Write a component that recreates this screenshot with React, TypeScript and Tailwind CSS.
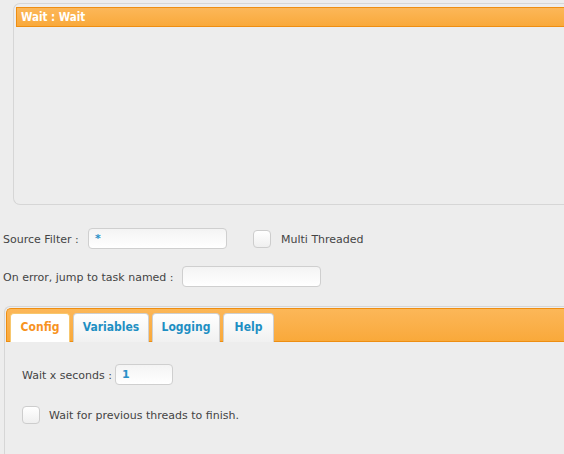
import React from 'react'

const font = { fontFamily: '"DejaVu Sans", Verdana, sans-serif' }
const cond = { fontFamily: '"DejaVu Sans Condensed", "DejaVu Sans", sans-serif' }

const TextInput = ({ value, className }: { value?: string; className?: string }) => (
  <div
    className={`h-[21px] rounded-[4px] border border-[#cfcfcf] bg-gradient-to-b from-[#f4f4f4] to-white pl-[6px] text-[11px] leading-[19px] font-bold text-[#2a90c8] ${className || ''}`}
  >
    {value}
  </div>
)

const CheckBox = () => (
  <div className="h-[18px] w-[18px] shrink-0 rounded-[4px] border border-[#cdcdcd] bg-gradient-to-b from-white to-[#efefef]" />
)

// label sits 1px lower than the box centre
const Label = ({ children, className }: { children: React.ReactNode; className?: string }) => (
  <div className={`h-[21px] leading-[23px] ${className || ''}`}>{children}</div>
)

const tabs = [
  { label: 'Config', w: 'w-[60px]', active: true },
  { label: 'Variables', w: 'w-[76px]' },
  { label: 'Logging', w: 'w-[68px]' },
  { label: 'Help', w: 'w-[51px]' },
]

export default function App() {
  return (
    <div
      className="h-[454px] w-[564px] overflow-hidden bg-[#ededed] text-[11px] text-[#444]"
      style={font}
    >
      {/* task list */}
      <div className="ml-[13px] mt-[3px] h-[202px] w-[560px] rounded-l-[7px] border border-r-0 border-[#d6d6d6] pl-[2px] pt-[3px]">
        <div
          className="h-[20px] border border-[#ee8e12] bg-gradient-to-b from-[#fcb758] to-[#f9a93a] pl-[4px] text-[11.5px] font-bold leading-[18px] text-white"
          style={cond}
        >
          Wait : Wait
        </div>
      </div>

      {/* filter row */}
      <div className="mt-[23px] flex items-center">
        <Label className="w-[88px] pl-[3px]">Source Filter :</Label>
        <TextInput value="*" className="w-[139px]" />
        <div className="ml-[26px]">
          <CheckBox />
        </div>
        <Label className="ml-[10px]">Multi Threaded</Label>
      </div>

      <div className="mt-[17px] flex items-center">
        <Label className="w-[182px] pl-[3px]">On error, jump to task named :</Label>
        <TextInput className="w-[139px]" />
      </div>

      {/* tab panel */}
      <div className="ml-[4px] mt-[19px] h-[160px] rounded-tl-[6px] border-l border-t border-[#d6d6d6] pl-[1px] pt-[1px]">
        <div className="flex h-[34px] items-end gap-[3px] rounded-tl-[5px] border border-r-0 border-[#ee8e12] bg-gradient-to-b from-[#fcb758] to-[#f9a93a] pl-[3px]">
          {tabs.map((t) => (
            <div
              key={t.label}
              style={cond}
              className={`${t.w} -mb-[1px] h-[29px] rounded-t-[4px] border border-b-0 text-center text-[12px] font-bold leading-[27px] ${
                t.active
                  ? 'border-[#f7c76e] bg-white text-[#f7931e]'
                  : 'border-[#cfcfcf] bg-gradient-to-b from-white to-[#f1f1f1] text-[#1e8fc3]'
              }`}
            >
              {t.label}
            </div>
          ))}
        </div>

        <div className="pl-[16px] pt-[22px]">
          <div className="flex items-center">
            <Label className="w-[93px]">Wait x seconds :</Label>
            <TextInput value="1" className="w-[58px]" />
          </div>
          <div className="mt-[19px] flex items-center">
            <CheckBox />
            <Label className="ml-[9px]">Wait for previous threads to finish.</Label>
          </div>
        </div>
      </div>
    </div>
  )
}
